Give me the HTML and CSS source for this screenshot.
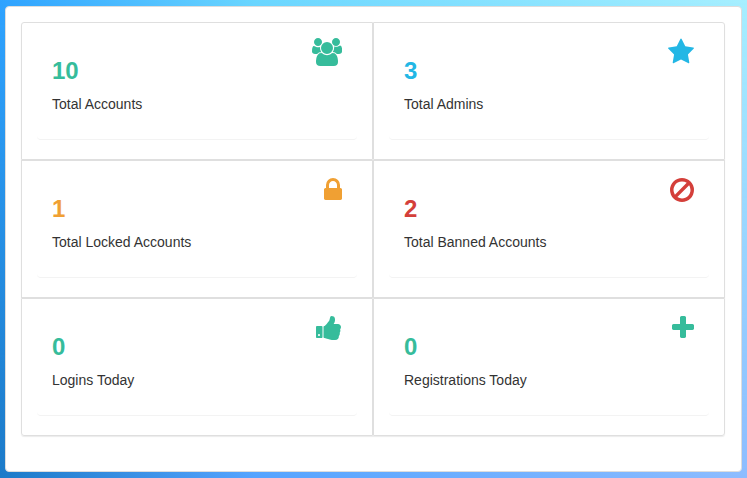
FILE: index.html
```
<!DOCTYPE html>
<html lang="en">
<head>
<meta charset="utf-8">
<meta name="viewport" content="width=device-width, initial-scale=1">
<title>Account statistics</title>
<link rel="stylesheet" href="styles.css">
</head>
<body>
<main class="card">
  <div class="stats">
    <section class="cell">
      <div class="panel green">
        <div class="text"><div class="value">10</div><div class="label">Total Accounts</div></div>
        <svg class="icon" viewBox="64 0 1920 1792" aria-hidden="true"><path d="M657 896q-162 5-265 128h-134q-82 0-138-40.500t-56-118.500q0-353 124-353 6 0 43.500 21t97.500 42.500 119 21.500q67 0 133-23-5 37-5 66 0 159 93 286zm1071 637q0 120-73 189.500t-194 69.500h-874q-121 0-194-69.500t-73-189.500q0-53 3.500-103.500t14-109 26.500-108.500 43-97.500 62-81 85.500-53.500 111.500-20q10 0 43 21.500t73 48 107 48 135 21.500 135-21.500 107-48 73-48 43-21.500q61 0 111.500 20t85.500 53.500 62 81 43 97.500 26.500 108.500 14 109 3.500 103.500zm-1024-1277q0 106-75 181t-181 75-181-75-75-181 75-181 181-75 181 75 75 181zm704 384q0 159-112.500 271.500t-271.500 112.500-271.500-112.500-112.500-271.500 112.500-271.500 271.500-112.500 271.500 112.500 112.500 271.500zm576 225q0 78-56 118.500t-138 40.500h-134q-103-123-265-128 93-127 93-286 0-29-5-66 66 23 133 23 59 0 119-21.500t97.500-42.500 43.500-21q124 0 124 353zm-128-609q0 106-75 181t-181 75-181-75-75-181 75-181 181-75 181 75 75 181z"/></svg>
      </div>
    </section>
    <section class="cell">
      <div class="panel blue">
        <div class="text"><div class="value">3</div><div class="label">Total Admins</div></div>
        <svg class="icon" viewBox="64 0 1664 1792" aria-hidden="true"><path d="M1728 647q0 22-26 48l-363 354 86 500q1 7 1 20 0 21-10.500 35.500t-30.500 14.500q-19 0-40-12l-449-236-449 236q-22 12-40 12-21 0-31.500-14.500t-10.500-35.500q0-6 2-20l86-500-364-354q-25-27-25-48 0-37 56-46l502-73 225-455q19-41 49-41t49 41l225 455 502 73q56 9 56 46z"/></svg>
      </div>
    </section>
    <section class="cell">
      <div class="panel orange">
        <div class="text"><div class="value">1</div><div class="label">Total Locked Accounts</div></div>
        <svg class="icon" viewBox="320 0 1152 1792" aria-hidden="true"><path d="M640 768h512v-192q0-106-75-181t-181-75-181 75-75 181v192zm832 96v576q0 40-28 68t-68 28h-960q-40 0-68-28t-28-68v-576q0-40 28-68t68-28h32v-192q0-184 132-316t316-132 316 132 132 316v192h32q40 0 68 28t28 68z"/></svg>
      </div>
    </section>
    <section class="cell">
      <div class="panel red">
        <div class="text"><div class="value">2</div><div class="label">Total Banned Accounts</div></div>
        <svg class="icon" viewBox="128 0 1536 1792" aria-hidden="true"><path d="M1440 893q0-161-87-295l-754 753q137 89 297 89 111 0 211.500-43.500t173.500-116.500 116-174.500 43-212.500zm-999 299l755-754q-135-91-300-91-148 0-273 73t-198 199-73 274q0 162 89 299zm1223-299q0 157-61 300t-163.500 246-245 164-298.500 61-298.500-61-245-164-163.500-246-61-300 61-299.500 163.500-245.500 245-164 298.500-61 298.500 61 245 164 163.500 245.500 61 299.500z"/></svg>
      </div>
    </section>
    <section class="cell">
      <div class="panel green">
        <div class="text"><div class="value">0</div><div class="label">Logins Today</div></div>
        <svg class="icon" viewBox="64 0 1664 1792" aria-hidden="true"><path d="M320 1344q0-26-19-45t-45-19q-27 0-45.500 19t-18.500 45q0 27 18.500 45.500t45.500 18.500q26 0 45-18.500t19-45.500zm160-512v640q0 26-19 45t-45 19h-288q-26 0-45-19t-19-45v-640q0-26 19-45t45-19h288q26 0 45 19t19 45zm1184 0q0 86-55 149 15 44 15 76 3 76-43 137 17 56 0 117-15 57-54 94 9 112-49 181-64 76-197 78h-129q-66 0-144-15.500t-121.500-29-120.500-39.500q-123-43-158-44-26-1-45-19.500t-19-44.500v-641q0-25 18-43.500t43-20.500q24-2 76-59t101-121q68-87 101-120 18-18 31-48t17.500-48.500 13.500-60.500q7-39 12.500-61t19.500-52 34-50q19-19 45-19 46 0 82.500 10.500t60 26 40 40.500 24 45 12 50 5 45 .5 39q0 38-9.500 76t-19 60-27.500 56q-3 6-10 18t-11 22-8 24h277q78 0 135 57t57 135z"/></svg>
      </div>
    </section>
    <section class="cell">
      <div class="panel green">
        <div class="text"><div class="value">0</div><div class="label">Registrations Today</div></div>
        <svg class="icon" viewBox="192 0 1408 1792" aria-hidden="true"><path d="M1600 736v192q0 40-28 68t-68 28h-416v416q0 40-28 68t-68 28h-192q-40 0-68-28t-28-68v-416h-416q-40 0-68-28t-28-68v-192q0-40 28-68t68-28h416v-416q0-40 28-68t68-28h192q40 0 68 28t28 68v416h416q40 0 68 28t28 68z"/></svg>
      </div>
    </section>
  </div>
</main>
</body>
</html>
```
FILE: styles.css
```
* {
  box-sizing: border-box;
}

html {
  min-height: 100%;
  background: linear-gradient(to right, #2fa3ff, #6ad6ff 34%, #a6efff);
}

/* The lower layer fades in over the sky tones of the page root. */
html::before {
  content: "";
  position: absolute;
  inset: 0;
  background: linear-gradient(to right, #1c7ac8, #55a3ff 34%, #8dbcff);
  -webkit-mask-image: linear-gradient(to bottom, transparent, #000);
  mask-image: linear-gradient(to bottom, transparent, #000);
}

body {
  position: relative;
  margin: 0;
  padding: 6px 5px;
  color: #333;
  font: 14px/20px "Liberation Sans", Arial, sans-serif;
}

.card {
  padding: 15px 16px 35px 15px;
  border: 1px solid #ddd;
  border-radius: 4px;
  background: #fff;
}

.stats {
  display: grid;
  grid-template-columns: 1fr 1fr;
  border-radius: 3px;
  box-shadow: 0 1px 1px rgba(0, 0, 0, 0.08);
}

.cell {
  padding: 15px 15px 19px;
  border: 1px solid #dfdfdf;
}

.cell:first-child {
  border-top-left-radius: 3px;
}

.cell:nth-child(2) {
  border-top-right-radius: 3px;
}

.cell:nth-last-child(2) {
  border-bottom-left-radius: 3px;
}

.cell:last-child {
  border-bottom-right-radius: 3px;
}

.panel {
  display: flex;
  justify-content: space-between;
  align-items: flex-start;
  padding: 0 15px 25px;
  border-bottom: 1px solid #f3f3f3;
  border-radius: 4px;
}

.text {
  padding-top: 20px;
}

.value {
  margin-bottom: 10px;
  font-size: 24px;
  font-weight: bold;
  line-height: 26px;
}

.label {
  color: #333;
}

.icon {
  height: 28px;
  fill: currentColor;
}

.green {
  color: #36bc9b;
}

.blue {
  color: #23b7e5;
}

.orange {
  color: #f0a033;
}

.red {
  color: #d43f3a;
}
```
